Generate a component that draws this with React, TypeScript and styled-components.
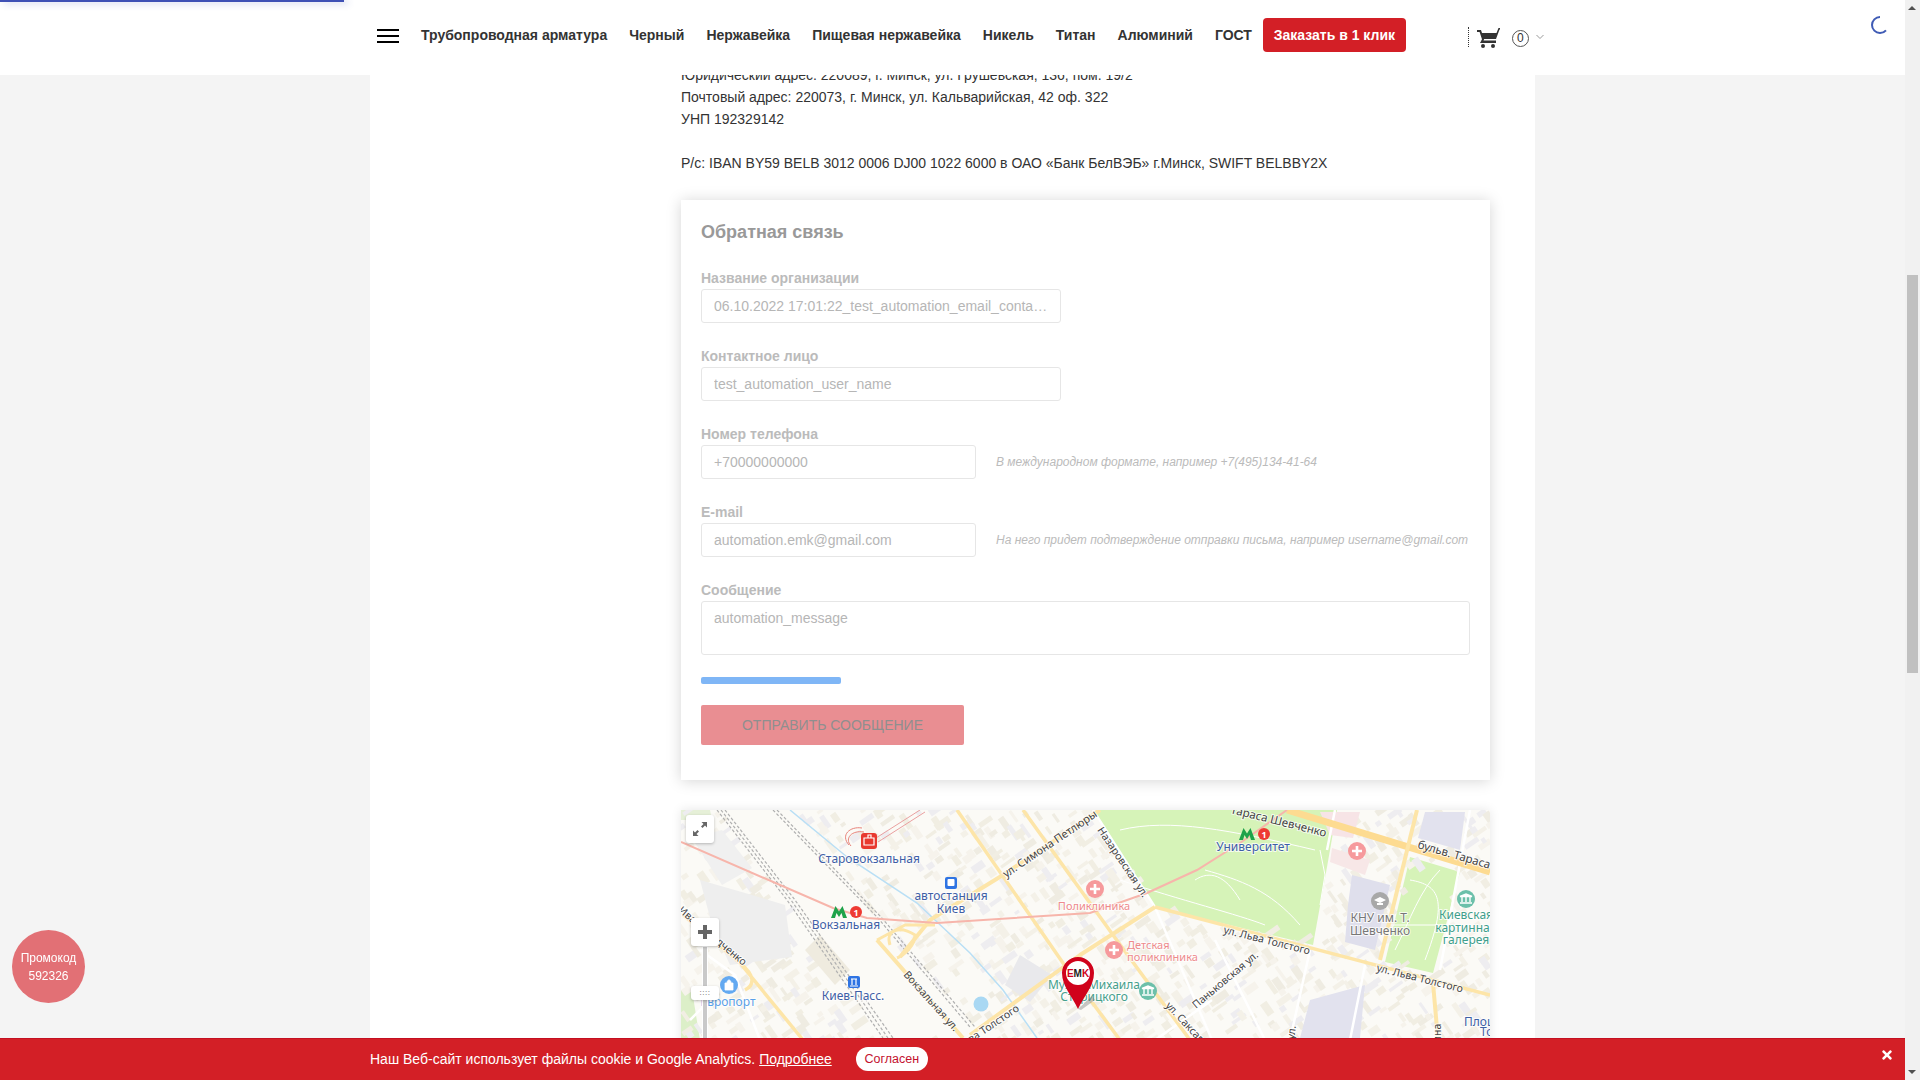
import React from "react";
import styled, { createGlobalStyle } from "styled-components";
import { FaTimes } from "react-icons/fa";

const Global = createGlobalStyle`
  html, body { margin: 0; padding: 0; height: 100%; overflow: hidden; background: #f4f4f4; }
  body { font-family: "Liberation Sans", Arial, sans-serif; font-size: 14px; color: #333; }
`;

const Shell = styled.div`
  display: flex;
  height: 100vh;
  overflow: hidden;
`;
const Viewport = styled.div`
  flex: 1;
  display: grid;
  grid-template-columns: 370px 1165px 1fr;
  height: 100vh;
  overflow: hidden;
`;
const Sheet = styled.main`
  grid-column: 2;
  background: #fff;
  padding: 64px 45px 0 311px;
  height: 1200px;
`;
const Requisites = styled.div`
  line-height: 22px;
  color: #333;
  margin-bottom: 26px;
`;
const Blank = styled.div`
  height: 22px;
`;

const Header = styled.header`
  position: fixed;
  z-index: 5;
  top: 0;
  left: 0;
  right: 15px;
  height: 75px;
  box-sizing: border-box;
  background: #fff;
  display: flex;
  align-items: center;
  padding: 0 0 5px 377px;
`;
const LoadBar = styled.div`
  position: absolute;
  top: 0;
  left: 0;
  width: 344px;
  height: 2px;
  background: #3f51b5;
  box-shadow: 4px 1px 7px rgba(63, 81, 181, 0.45);
`;
const Burger = styled.button`
  display: flex;
  flex-direction: column;
  gap: 4px;
  width: 22px;
  padding: 0;
  margin: 1px 22px 0 0;
  border: 0;
  background: none;
  span { display: block; height: 2px; background: #000; }
`;
const Nav = styled.nav`
  display: flex;
  align-items: center;
  gap: 22px;
`;
const NavLink = styled.a`
  font-weight: 700;
  font-size: 14px;
  color: #333;
  white-space: nowrap;
`;
const OrderButton = styled.button`
  margin-left: 11px;
  height: 34px;
  width: 143px;
  padding: 0;
  border: 0;
  border-radius: 4px;
  background: #d31f26;
  color: #fff;
  font: 700 14px "Liberation Sans", Arial, sans-serif;
  white-space: nowrap;
`;
const CartArea = styled.div`
  display: flex;
  align-items: center;
  margin-left: 62px;
  margin-top: 4px;
  height: 20px;
  padding-left: 7px;
  border-left: 1px dotted #333;
`;
const CartIcon = styled.svg`
  margin-top: 2px;
`;
const Count = styled.span`
  width: 17px;
  height: 17px;
  margin: 2px 0 0 12px;
  border: 1px solid #555;
  border-radius: 50%;
  box-sizing: border-box;
  font-size: 12px;
  line-height: 15px;
  text-align: center;
  color: #333;
`;
const Chevron = styled.svg`
  margin-left: 7px;
`;
const Spinner = styled.svg`
  position: absolute;
  left: 1870px;
  top: 15px;
`;

const Card = styled.section`
  background: #fff;
  padding: 20px 20px 35px;
  height: 580px;
  box-sizing: border-box;
  box-shadow: 0 1px 14px rgba(0, 0, 0, 0.17);
  margin-bottom: 30px;
`;
const Title = styled.h2`
  margin: 0 0 23px;
  font-size: 18px;
  line-height: 24px;
  font-weight: 700;
  color: #999;
`;
const Field = styled.div`
  margin-bottom: 22px;
`;
const FieldLabel = styled.label`
  display: block;
  font-weight: 700;
  font-size: 14px;
  line-height: 22px;
  color: #bbb;
`;
const FieldRow = styled.div`
  display: flex;
  align-items: center;
  gap: 20px;
`;
const TextInput = styled.input<{ $w: number }>`
  width: ${(p) => p.$w}px;
  height: 34px;
  box-sizing: border-box;
  padding: 0 12px;
  border: 1px solid #e6e6e6;
  border-radius: 3px;
  background: #fff;
  font: 14px "Liberation Sans", Arial, sans-serif;
  color: #b6b6b6;
  text-overflow: ellipsis;
  outline: none;
`;
const Hint = styled.em`
  font-size: 12px;
  color: #bbb;
  white-space: nowrap;
`;
const Message = styled.textarea`
  display: block;
  width: 769px;
  height: 54px;
  box-sizing: border-box;
  padding: 7px 12px;
  border: 1px solid #e6e6e6;
  border-radius: 3px;
  resize: none;
  font: 14px/18px "Liberation Sans", Arial, sans-serif;
  color: #b6b6b6;
  outline: none;
`;
const Progress = styled.div`
  width: 140px;
  height: 7px;
  margin-bottom: 21px;
  border-radius: 2px;
  background: #7fb6f6;
`;
const Submit = styled.button`
  display: block;
  width: 263px;
  height: 40px;
  padding: 0;
  border: 0;
  border-radius: 2px;
  background: #e98e92;
  color: #8f8f8f;
  font: 14px "Liberation Sans", Arial, sans-serif;
`;

const MapBox = styled.div`
  position: relative;
  width: 809px;
  height: 270px;
  overflow: hidden;
  box-shadow: 0 0 10px rgba(0, 0, 0, 0.1);
  svg.map { display: block; }
`;
const MapControl = styled.button<{ $x: number; $y: number; $h: number }>`
  position: absolute;
  left: ${(p) => p.$x}px;
  top: ${(p) => p.$y}px;
  width: 28px;
  height: ${(p) => p.$h}px;
  padding: 0;
  border: 0;
  border-radius: 3px;
  background: #fff;
  box-shadow: 0 1px 3px rgba(0, 0, 0, 0.25);
  display: flex;
  align-items: center;
  justify-content: center;
`;
const SliderTrack = styled.div`
  position: absolute;
  left: 21px;
  top: 136px;
  width: 6px;
  height: 134px;
  box-sizing: border-box;
  background: #c9c9c9;
  border: 1px solid #fff;
`;
const Grip = styled.span`
  font-size: 8px;
  line-height: 8px;
  letter-spacing: 0.5px;
  color: #555;
`;

const Promo = styled.div`
  position: fixed;
  z-index: 6;
  left: 12px;
  top: 930px;
  width: 73px;
  height: 73px;
  border-radius: 50%;
  background: #e27075;
  color: #fff;
  font-size: 12px;
  line-height: 18px;
  text-align: center;
  display: flex;
  flex-direction: column;
  justify-content: center;
`;

const Cookie = styled.div`
  position: fixed;
  z-index: 7;
  left: 0;
  right: 15px;
  bottom: 0;
  height: 42px;
  box-sizing: border-box;
  background: #d31f26;
  border-top: 1px solid #c40f22;
  display: flex;
  align-items: center;
  padding: 0 0 1px 370px;
  color: #fff;
  font-size: 14px;
`;
const CookieLink = styled.a`
  color: #fff;
  text-decoration: underline;
  margin-left: 4px;
`;
const Agree = styled.button`
  width: 72px;
  height: 24px;
  margin-left: 24px;
  padding: 0;
  border: 0;
  border-radius: 12px;
  background: #fff;
  color: #c4122f;
  font: 12.5px "Liberation Sans", Arial, sans-serif;
`;
const CloseCookie = styled.span`
  position: absolute;
  right: 11px;
  top: 9px;
  display: flex;
  color: #fff;
  font-size: 14px;
`;

const Scrollbar = styled.aside`
  position: relative;
  z-index: 8;
  width: 15px;
  flex: none;
  background: #f1f1f1;
`;
const Thumb = styled.div`
  position: absolute;
  left: 2px;
  top: 275px;
  width: 11px;
  height: 398px;
  background: #c0c0c0;
`;
const Arrow = styled.div<{ $down?: boolean }>`
  position: absolute;
  left: 3px;
  ${(p) => (p.$down ? "bottom: 6px;" : "top: 6px;")}
  width: 0;
  height: 0;
  border-left: 4px solid transparent;
  border-right: 4px solid transparent;
  ${(p) => (p.$down ? "border-top: 4px solid #505050;" : "border-bottom: 4px solid #505050;")}
`;

const MapLabel = styled.text<{ $c: string; $s?: number }>`
  font-family: "Noto Sans", "Open Sans", sans-serif;
  font-size: ${(p) => p.$s ?? 12}px;
  fill: ${(p) => p.$c};
  paint-order: stroke;
  stroke: rgba(255, 255, 255, 0.75);
  stroke-width: 2px;
`;

type Pt = [number, number];
const inPoly = (p: Pt, poly: Pt[]) => {
  let c = false;
  for (let i = 0, j = poly.length - 1; i < poly.length; j = i++) {
    const [xi, yi] = poly[i];
    const [xj, yj] = poly[j];
    if (yi > p[1] !== yj > p[1] && p[0] < ((xj - xi) * (p[1] - yi)) / (yj - yi) + xi) c = !c;
  }
  return c;
};
const park: Pt[] = [[1100, 810], [1337, 810], [1327, 867], [1313, 945], [1155, 907], [1095, 815]];
const park2: Pt[] = [[1410, 857], [1460, 872], [1433, 973], [1385, 962]];
const railBand: Pt[] = [[712, 810], [790, 810], [985, 1040], [870, 1040], [778, 910]];
const holes = [park, park2, railBand];

const makeBlocks = () => {
  let seed = 48271;
  const rnd = () => {
    seed = (seed * 16807) % 2147483647;
    return seed / 2147483647;
  };
  const out: { x: number; y: number; w: number; h: number; a: number; f: string }[] = [];
  const tones = ["#f4f1e8", "#f1eee3", "#f6f3ec", "#efece2", "#eeedf0"];
  for (let x = 680; x < 1500; x += 11) {
    for (let y = 810; y < 1045; y += 11) {
      const px = x + rnd() * 6;
      const py = y + rnd() * 6;
      if (rnd() < 0.25 || holes.some((h) => inPoly([px, py], h))) continue;
      const w = 5 + rnd() * 12;
      out.push({
        x: px,
        y: py,
        w,
        h: 3 + rnd() * 5,
        a: rnd() > 0.5 ? 55 : -35,
        f: tones[Math.floor(rnd() * tones.length)],
      });
    }
  }
  return out;
};
const blocks = makeBlocks();

const Med = ({ x, y }: { x: number; y: number }) => (
  <g>
    <circle cx={x} cy={y} r={9} fill="#f69a9c" />
    <path d={`M${x - 5} ${y}H${x + 5}M${x} ${y - 5}V${y + 5}`} stroke="#fff" strokeWidth={2.6} />
  </g>
);
const Museum = ({ x, y }: { x: number; y: number }) => (
  <g>
    <circle cx={x} cy={y} r={9} fill="#6cc0aa" />
    <path
      d={`M${x - 6} ${y - 2.5}L${x} ${y - 5}L${x + 6} ${y - 2.5}ZM${x - 4} ${y - 2}V${y + 3}M${x} ${y - 2}V${y + 3}M${x + 4} ${y - 2}V${y + 3}M${x - 6} ${y + 4}H${x + 6}`}
      stroke="#fff"
      strokeWidth={1.4}
      fill="#fff"
    />
  </g>
);
const Metro = ({ x, y }: { x: number; y: number }) => (
  <g>
    <path
      d={`M${x - 8} ${y + 6}L${x - 3.5} ${y - 6}L${x} ${y - 0.5}L${x + 3.5} ${y - 6}L${x + 8} ${y + 6}H${x + 4}L${x + 2.5} ${y + 1}L${x} ${y + 5}L${x - 2.5} ${y + 1}L${x - 4} ${y + 6}Z`}
      fill="#1ea34a"
    />
    <circle cx={x + 17} cy={y} r={6} fill="#ee3a33" />
    <text x={x + 17} y={y + 3.5} textAnchor="middle" fontSize={9} fontWeight={700} fill="#fff" fontFamily="Noto Sans, sans-serif">
      1
    </text>
  </g>
);

const CityMap = () => (
  <svg className="map" width={809} height={270} viewBox="681 810 809 270">
    <rect x={680} y={810} width={810} height={270} fill="#fbfaf6" />
    <polygon points={park.map((p) => p.join(",")).join(" ")} fill="#d6f3b8" />
    <polygon points={park2.map((p) => p.join(",")).join(" ")} fill="#d6f3b8" />
    <polygon points="680,990 692,990 700,1040 680,1040" fill="#dcefc8" />
    <polygon points="680,810 710,810 712,820 680,820" fill="#e6f0d8" />
    {blocks.map((b, i) => (
      <rect key={i} x={b.x} y={b.y} width={b.w} height={b.h} fill={b.f} transform={`rotate(${b.a} ${b.x} ${b.y})`} />
    ))}
    <polygon points="700,880 752,895 785,905 792,957 730,965 712,925" fill="#eeeeee" />
    <polygon points="692,838 722,830 752,868 722,885" fill="#f0f0f0" />
    <polygon points="820,935 850,970 835,985 805,950" fill="#efebdf" />
    <polygon points="1020,955 1052,975 1030,1002 1005,985" fill="#e9e9ec" />
    <polygon points="1352,875 1390,885 1375,950 1345,942 1348,905" fill="#dfdfec" />
    <polygon points="1320,812 1360,812 1353,838 1330,835" fill="#f7e4e6" />
    <polygon points="1425,812 1465,812 1460,850 1418,838" fill="#e2e2ee" />
    <polygon points="1310,1000 1365,985 1360,1038 1300,1038" fill="#e2e2ee" />
    <polygon points="1332,848 1370,860 1365,875 1330,862" fill="#f7e7e7" />

    <g fill="none" stroke="#fff" strokeWidth={1}>
      <path d="M1120 830C1170 818 1230 830 1315 850M1205 870C1240 880 1270 890 1300 925M1195 880C1210 870 1225 875 1240 900M1120 880C1180 900 1240 915 1265 925" />
      <path d="M1320 850L1325 875L1320 905M1410 880C1440 885 1448 900 1425 960M1395 950C1410 920 1420 890 1440 870M1390 925H1440" />
    </g>
    <g fill="none" stroke="#b9dff5" strokeWidth={1.5}>
      <path d="M790 810L847 857L917 903L970 953L1003 990L1037 1038" />
    </g>
    <circle cx={981} cy={1004} r={7.5} fill="#a9d8f3" />

    <g fill="none" stroke="#b0b0b0" strokeWidth={1.2} strokeDasharray="3 2">
      <path d="M717 810L787 900L883 1038" />
      <path d="M721 810L791 900L888 1038" />
      <path d="M725 810L795 900L893 1038" />
      <path d="M773 810L877 917L970 1027" />
      <path d="M777 810L881 917L975 1027" />
    </g>
    <g fill="none" stroke="#fff" strokeWidth={2.5}>
      <path d="M1093 810L1155 907L1212 1040" />
      <path d="M1215 940L1265 1040M1310 950L1290 1040M1365 965L1350 1040M1212 1000L1155 1040" />
      <path d="M1335 810L1327 850M1470 810L1440 970M700 950L735 975L690 1020M735 975L760 1040" />
    </g>
    <g fill="none" stroke="#fde5a8" strokeLinejoin="round">
      <path d="M1287 810L1490 872" strokeWidth={7} stroke="#fddb91" />
      <path d="M1155 907L1490 995" strokeWidth={3.5} />
      <path d="M1155 907L1080 955L970 1035" strokeWidth={4} />
      <path d="M1100 810L1003 875L930 920L900 957" strokeWidth={4} />
      <path d="M957 810L1063 963L1120 1040" strokeWidth={3.5} />
      <path d="M1023 810L1113 935L1190 1040" strokeWidth={3.5} />
      <path d="M877 940L963 1038" strokeWidth={4} />
      <path d="M877 940L905 925H935M890 945C885 930 900 925 915 935C915 945 905 955 897 958" strokeWidth={3} />
      <path d="M683 915L740 963L803 1040M740 963C755 975 755 985 745 990" strokeWidth={3.5} />
      <path d="M1417 810L1380 960" strokeWidth={4} />
      <path d="M1433 983L1438 1040" strokeWidth={4} />
    </g>
    <path
      d="M681 842L833 908L867 918L937 923L1090 913L1147 893L1197 870L1240 843L1287 810"
      fill="none"
      stroke="#f7b5ab"
      strokeWidth={2}
    />
    <path d="M849 845C840 835 850 826 862 828M851 846C844 838 852 830 864 832" fill="none" stroke="#e8837a" strokeWidth={1} />
    <path d="M876 838L920 810M878 842L925 812" fill="none" stroke="#eaa0a0" strokeWidth={1} />

    <rect x={861} y={833} width={16} height={16} rx={3} fill="#e8392f" />
    <path d="M864 838H874V845H864ZM868 838V835H871V838" fill="none" stroke="#fff" strokeWidth={1.2} />
    <MapLabel x={869} y={863} textAnchor="middle" $c="#3e5fa6">Старовокзальная</MapLabel>
    <rect x={945} y={877} width={12} height={12} rx={2} fill="#2f74e3" />
    <rect x={947.5} y={879} width={7} height={7} rx={1} fill="#fff" />
    <MapLabel x={951} y={900} textAnchor="middle" $c="#3e5fa6">автостанция</MapLabel>
    <MapLabel x={951} y={913} textAnchor="middle" $c="#3e5fa6">Киев</MapLabel>
    <Metro x={839} y={912} />
    <MapLabel x={846} y={929} textAnchor="middle" $c="#3e5fa6">Вокзальная</MapLabel>
    <rect x={848} y={976} width={12} height={12} rx={2} fill="#2f74e3" />
    <path d="M851 979H857M852 979V985M856 979V985M850 986H858" stroke="#fff" strokeWidth={1.2} />
    <MapLabel x={853} y={1000} textAnchor="middle" $c="#3e5fa6">Киев-Пасс.</MapLabel>
    <circle cx={729} cy={985} r={9} fill="#63a9f1" />
    <path d="M725 983H733V990H725ZM727 983C727 979 731 979 731 983" fill="#fff" stroke="#fff" strokeWidth={0.8} />
    <MapLabel x={728} y={1006} textAnchor="middle" $c="#5aa0e8">Европорт</MapLabel>

    <Med x={1095} y={889} />
    <MapLabel x={1094} y={910} textAnchor="middle" $c="#ee8a8c" $s={11}>Поликлиника</MapLabel>
    <Med x={1114} y={950} />
    <MapLabel x={1127} y={949} $c="#ee8a8c" $s={11}>Детская</MapLabel>
    <MapLabel x={1127} y={961} $c="#ee8a8c" $s={11}>поликлиника</MapLabel>
    <MapLabel x={1094} y={989} textAnchor="middle" $c="#46a08c">Музей Михаила</MapLabel>
    <MapLabel x={1094} y={1001} textAnchor="middle" $c="#46a08c">Старицкого</MapLabel>
    <Museum x={1148} y={991} />
    <Metro x={1247} y={834} />
    <MapLabel x={1253} y={851} textAnchor="middle" $c="#3e5fa6">Университет</MapLabel>
    <Med x={1357} y={851} />
    <circle cx={1380} cy={901} r={9} fill="#a8a8a8" />
    <path d="M1374 900L1380 897L1386 900L1380 903ZM1377 903V905H1383V903" fill="#fff" />
    <MapLabel x={1380} y={922} textAnchor="middle" $c="#777">КНУ им. Т.</MapLabel>
    <MapLabel x={1380} y={935} textAnchor="middle" $c="#777">Шевченко</MapLabel>
    <Museum x={1466} y={899} />
    <MapLabel x={1466} y={919} textAnchor="middle" $c="#3f9f8c">Киевская</MapLabel>
    <MapLabel x={1466} y={932} textAnchor="middle" $c="#3f9f8c">картинная</MapLabel>
    <MapLabel x={1466} y={944} textAnchor="middle" $c="#3f9f8c">галерея</MapLabel>
    <MapLabel x={1464} y={1026} $c="#3e5fa6">Площадь</MapLabel>
    <MapLabel x={1480} y={1036} $c="#3e5fa6">Толстого</MapLabel>

    <MapLabel x={1006} y={878} $c="#444" $s={11} transform="rotate(-34 1006 878)">ул. Симона Петлюры</MapLabel>
    <MapLabel x={1097} y={830} $c="#444" $s={10.5} transform="rotate(56 1097 830)">Назаровская ул.</MapLabel>
    <MapLabel x={1230} y={813} $c="#444" $s={11.5} transform="rotate(14 1230 813)">Тараса Шевченко</MapLabel>
    <MapLabel x={1417} y={848} $c="#444" $s={11.5} transform="rotate(16 1417 848)">бульв. Тараса</MapLabel>
    <MapLabel x={1223} y={933} $c="#444" $s={10.5} transform="rotate(14 1223 933)">ул. Льва Толстого</MapLabel>
    <MapLabel x={1376} y={971} $c="#444" $s={10.5} transform="rotate(14 1376 971)">ул. Льва Толстого</MapLabel>
    <MapLabel x={1196} y={1009} $c="#444" $s={10.5} transform="rotate(-40 1196 1009)">Паньковская ул.</MapLabel>
    <MapLabel x={1165} y={1006} $c="#444" $s={10.5} transform="rotate(47 1165 1006)">ул. Саксаганского</MapLabel>
    <MapLabel x={1020} y={1010} textAnchor="end" $c="#444" $s={10.5} transform="rotate(-34 1020 1010)">ул. Льва Толстого</MapLabel>
    <MapLabel x={903} y={975} $c="#444" $s={10.5} transform="rotate(48 903 975)">Вокзальная ул.</MapLabel>
    <MapLabel x={743} y={966} textAnchor="end" $c="#444" $s={10.5} transform="rotate(40 743 966)">Ивана Федченко</MapLabel>
    <MapLabel x={1441} y={1062} $c="#444" $s={10.5} transform="rotate(-90 1441 1062)">Ленина</MapLabel>
    <MapLabel x={1296} y={1026} textAnchor="end" $c="#444" $s={10.5} transform="rotate(-82 1296 1026)">Пушкинская ул.</MapLabel>

    <polygon points="1078,1009 1092,996 1095,1000 1081,1010" fill="#777" opacity={0.4} />
    <path d="M1078 1009C1072 996 1062 986 1062 973A16 16 0 0 1 1094 973C1094 986 1084 996 1078 1009Z" fill="#d0021b" />
    <circle cx={1078} cy={973} r={12} fill="#fff" />
    <text x={1078} y={976.5} textAnchor="middle" fontSize={10} fontWeight={700} fontFamily="Liberation Sans, sans-serif">
      <tspan fill="#d0021b">E</tspan>
      <tspan fill="#222">M</tspan>
      <tspan fill="#d0021b">K</tspan>
    </text>
  </svg>
);

const navItems = ["Трубопроводная арматура", "Черный", "Нержавейка", "Пищевая нержавейка", "Никель", "Титан", "Алюминий", "ГОСТ"];

export default function App() {
  return (
    <Shell>
      <Global />
      <Viewport>
        <Sheet>
          <Requisites>
            Юридический адрес: 220089, г. Минск, ул. Грушевская, 136, пом. 19/2
            <br />
            Почтовый адрес: 220073, г. Минск, ул. Кальварийская, 42 оф. 322
            <br />
            УНП 192329142
            <Blank />
            Р/с: IBAN BY59 BELB 3012 0006 DJ00 1022 6000 в ОАО «Банк БелВЭБ» г.Минск, SWIFT BELBBY2X
          </Requisites>
          <Card>
            <Title>Обратная связь</Title>
            <Field>
              <FieldLabel>Название организации</FieldLabel>
              <TextInput $w={360} readOnly value="06.10.2022 17:01:22_test_automation_email_contact_name" />
            </Field>
            <Field>
              <FieldLabel>Контактное лицо</FieldLabel>
              <TextInput $w={360} readOnly value="test_automation_user_name" />
            </Field>
            <Field>
              <FieldLabel>Номер телефона</FieldLabel>
              <FieldRow>
                <TextInput $w={275} readOnly value="+70000000000" />
                <Hint>В международном формате, например +7(495)134-41-64</Hint>
              </FieldRow>
            </Field>
            <Field>
              <FieldLabel>E-mail</FieldLabel>
              <FieldRow>
                <TextInput $w={275} readOnly value="automation.emk@gmail.com" />
                <Hint>На него придет подтверждение отправки письма, например username@gmail.com</Hint>
              </FieldRow>
            </Field>
            <Field>
              <FieldLabel>Сообщение</FieldLabel>
              <Message readOnly value="automation_message" />
            </Field>
            <Progress />
            <Submit>ОТПРАВИТЬ СООБЩЕНИЕ</Submit>
          </Card>
          <MapBox>
            <CityMap />
            <MapControl $x={5} $y={5} $h={28}>
              <svg width={16} height={16} viewBox="0 0 16 16" fill="#666">
                <path d="M9.5 1H15V6.5L13 4.5L10.5 7L9 5.5L11.5 3ZM6.5 15H1V9.5L3 11.5L5.5 9L7 10.5L4.5 13Z" />
              </svg>
            </MapControl>
            <SliderTrack />
            <MapControl $x={10} $y={108} $h={28}>
              <svg width={16} height={16} viewBox="0 0 16 16">
                <path d="M1 8H15M8 1V15" stroke="#666" strokeWidth={4} />
              </svg>
            </MapControl>
            <MapControl $x={10} $y={176} $h={14}>
              <Grip>::::</Grip>
            </MapControl>
          </MapBox>
        </Sheet>
      </Viewport>

      <Header>
        <LoadBar />
        <Burger aria-label="Меню">
          <span />
          <span />
          <span />
        </Burger>
        <Nav>
          {navItems.map((n) => (
            <NavLink key={n}>{n}</NavLink>
          ))}
        </Nav>
        <OrderButton>Заказать в 1 клик</OrderButton>
        <CartArea>
          <CartIcon width={24} height={24} viewBox="0 0 24 24" fill="#333">
            <path d="M7 18a2 2 0 1 0 0 4 2 2 0 0 0 0-4Zm10 0a2 2 0 1 0 0 4 2 2 0 0 0 0-4ZM1 4h4l1 3h14.5l2-5H24v1.5h-.5L20 13H8.2l-.7 1.5H20V17H4l2-3.7L3.6 6H1Z" />
          </CartIcon>
          <Count>0</Count>
          <Chevron width={8} height={6} viewBox="0 0 8 6">
            <path d="M.5 1L4 4.5L7.5 1" fill="none" stroke="#999" strokeWidth={1} />
          </Chevron>
        </CartArea>
        <Spinner width={20} height={20} viewBox="0 0 20 20">
          <path d="M10 2A8 8 0 0 0 10 18A8 8 0 0 0 16 15.3" fill="none" stroke="#3f5bb5" strokeWidth={2} />
        </Spinner>
      </Header>

      <Promo>
        <span>Промокод</span>
        <span>592326</span>
      </Promo>

      <Cookie>
        Наш Веб-сайт использует файлы cookie и Google Analytics.
        <CookieLink>Подробнее</CookieLink>
        <Agree>Согласен</Agree>
        <CloseCookie>
          <FaTimes />
        </CloseCookie>
      </Cookie>

      <Scrollbar>
        <Arrow />
        <Thumb />
        <Arrow $down />
      </Scrollbar>
    </Shell>
  );
}
